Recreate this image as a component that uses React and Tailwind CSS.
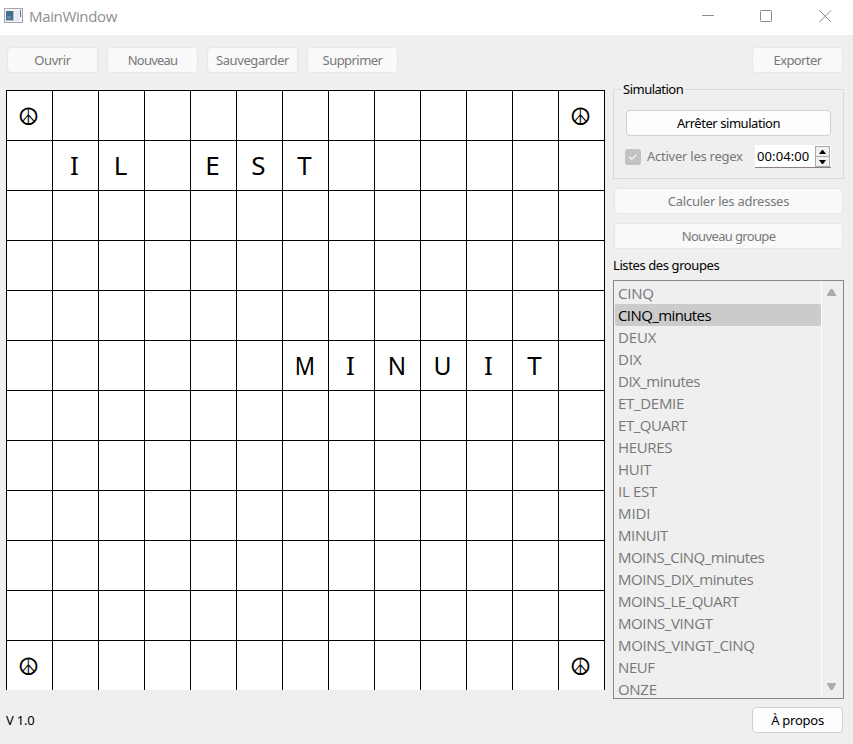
const ROWS = [
  "☮           ☮",
  " IL EST      ",
  "             ",
  "             ",
  "             ",
  "      MINUIT ",
  "             ",
  "             ",
  "             ",
  "             ",
  "             ",
  "☮           ☮",
];

const GROUPS = [
  ["CINQ", "tracking-[-0.25px]"],
  ["CINQ_minutes", "tracking-[-0.6px]"],
  ["DEUX", "tracking-[-0.1px]"],
  ["DIX", "tracking-[0px]"],
  ["DIX_minutes", "tracking-[-0.5px]"],
  ["ET_DEMIE", "tracking-[-0.3px]"],
  ["ET_QUART", "tracking-[-0.45px]"],
  ["HEURES", "tracking-[-0.35px]"],
  ["HUIT", "tracking-[-0.3px]"],
  ["IL EST", "tracking-[-0.3px]"],
  ["MIDI", "tracking-[-0.1px]"],
  ["MINUIT", "tracking-[-0.4px]"],
  ["MOINS_CINQ_minutes", "tracking-[-0.53px]"],
  ["MOINS_DIX_minutes", "tracking-[-0.45px]"],
  ["MOINS_LE_QUART", "tracking-[-0.5px]"],
  ["MOINS_VINGT", "tracking-[-0.4px]"],
  ["MOINS_VINGT_CINQ", "tracking-[-0.35px]"],
  ["NEUF", "tracking-[-0.4px]"],
  ["ONZE", "tracking-[-0.3px]"],
];

const LETTER_SHAPE = {
  M: "scale-x-[0.86]",
  N: "scale-x-[0.93]",
  U: "scale-x-[0.95]",
};

function Button({ children, enabled = false, className = "w-[91px]" }) {
  const tone = enabled
    ? "border-[#d0d0d0] bg-[#fdfdfd] text-black"
    : "border-[#e7e7e7] bg-[#f9f9f9] text-[#787878]";
  return (
    <button className={`flex h-[26px] shrink-0 items-center justify-center whitespace-nowrap rounded border pt-px ${tone} ${className}`}>
      {children}
    </button>
  );
}

function TitleBar() {
  return (
    <header className="flex h-[35px] items-center bg-white pb-[3px] pl-1">
      <svg width="19" height="16" viewBox="0 0 19 16" className="shrink-0">
        <rect x="0.5" y="0.500" width="18" height="14" fill="#f3f4f8" stroke="#a9a5ae" />
        <rect x="2" y="3" width="8" height="10" fill="#b9bdc2" />
        <rect x="2" y="3" width="7" height="9" fill="#42708f" />
        <rect x="3" y="8" width="4" height="3" fill="#5f8da0" />
        <rect x="11" y="3" width="4" height="10" fill="#e6e9ef" />
        <rect x="16" y="2" width="1" height="7" fill="#5272a8" />
      </svg>
      <span className="ml-[6px] pt-px font-['Open_Sans',sans-serif] text-[15px] tracking-[-0.35px] text-[#8f8f8f]">MainWindow</span>
      <svg width="131" height="14" viewBox="0 0 131 14" fill="none" stroke="#95868d" className="ml-auto mr-[20px]">
        <path d="M0 6.500h12" />
        <rect x="58.500" y="1.500" width="11" height="11" rx="1" />
        <path d="M117.500 1.500l11.500 11.500M129 1.500l-11.500 11.500" />
      </svg>
    </header>
  );
}

function LetterGrid() {
  return (
    <div className="w-[599px] border-r border-black bg-white">
      {ROWS.map((row, y) => (
        <div key={y} className="flex h-[50px] border-t border-black">
          {[...row].map((ch, x) => (
            <div key={x} className="flex w-[46px] items-center justify-center border-l border-black pb-[2px] pr-[2px] text-black">
              {ch === "☮" ? (
                <span className="pt-[5px] font-['DejaVu_Sans',sans-serif] text-[24px] leading-none tracking-normal">{ch}</span>
              ) : (
                <span className={`text-[26px] leading-none tracking-normal ${LETTER_SHAPE[ch] || ""}`}>{ch}</span>
              )}
            </div>
          ))}
        </div>
      ))}
    </div>
  );
}

function Simulation() {
  return (
    <fieldset className="relative h-[90px] w-[231px] border border-[#dadada] pl-3 pt-5">
      <span className="absolute -top-[10px] left-[7px] bg-[#efefef] px-[2px] leading-[18px] tracking-[-0.5px] text-black">Simulation</span>
      <Button enabled className="w-[205px] tracking-[-0.45px]">Arrêter simulation</Button>
      <div className="mt-[9px] flex h-[23px] items-center">
        <span className="-ml-px flex size-4 items-center justify-center rounded-[3px] bg-[#c3c3c3]">
          <svg width="10" height="8" viewBox="0 0 10 8" fill="none" stroke="#fff" strokeWidth="1.1">
            <path d="M1.500 4l2.300 2.300L8.500 1.600" />
          </svg>
        </span>
        <span className="ml-[6px] w-[108px] whitespace-nowrap tracking-[-0.25px] text-[#787878]">Activer les regex</span>
        <div className="flex h-[23px] w-[76px] items-start border-b border-[#8c7f84] bg-white">
          <span className="w-[60px] pl-[2px] leading-[23px] tracking-[0.1px] text-black">00:04:00</span>
          <div className="mt-px flex h-[21px] w-[15px] flex-col border border-[#a9a9a9] bg-[#f0f0f0]">
            <span className="flex flex-1 items-center justify-center border-b border-[#a9a9a9]">
              <svg width="7" height="4" viewBox="0 0 7 4"><path d="M0 4L3 0h1L7 4z" /></svg>
            </span>
            <span className="flex flex-1 items-center justify-center">
              <svg width="7" height="4" viewBox="0 0 7 4"><path d="M0 0L3 4h1L7 0z" /></svg>
            </span>
          </div>
        </div>
      </div>
    </fieldset>
  );
}

function GroupList() {
  return (
    <div className="flex h-[419px] w-[231px] overflow-hidden border border-[#828790] font-['Open_Sans',sans-serif] text-[15px]">
      <ul className="ml-px mt-px w-[206px]">
        {GROUPS.map(([name, tracking], i) => (
          <li
            key={name}
            className={`h-[22px] whitespace-nowrap rounded-[2px] pl-[3px] leading-[22px] ${tracking} ${i === 1 ? "bg-[#cbcbcb] text-black" : "text-[#787878]"}`}
          >
            {name}
          </li>
        ))}
      </ul>
      <div className="my-px flex flex-1 flex-col items-center justify-between border-l border-white pb-[7px] pr-[2px] pt-[7px]">
        <svg width="9" height="7" viewBox="0 0 9 7" fill="#acaba5"><path d="M0 6L3.500 0h2L9 6v1H0z" /></svg>
        <svg width="9" height="7" viewBox="0 0 9 7" fill="#acaba5"><path d="M0 1V0h9v1L5.500 7h-2z" /></svg>
      </div>
    </div>
  );
}

export default function App() {
  return (
    <div className="flex h-[744px] w-[853px] flex-col overflow-hidden bg-[#efefef] font-['Noto_Sans',sans-serif] text-[13px] tracking-[-0.2px]">
      <TitleBar />
      <nav className="mt-3 flex gap-[9px] pl-[7px] pr-[10px]">
        <Button className="w-[91px] tracking-[-0.4px]">Ouvrir</Button>
        <Button className="w-[91px] tracking-[-0.8px]">Nouveau</Button>
        <Button className="w-[91px] tracking-[-0.4px]">Sauvegarder</Button>
        <Button className="w-[91px] tracking-[-0.55px]">Supprimer</Button>
        <Button className="ml-auto w-[91px] tracking-[-0.6px]">Exporter</Button>
      </nav>
      <main className="mt-4 flex items-start gap-2 pl-[6px]">
        <div className="pt-px">
          <LetterGrid />
        </div>
        <aside className="flex w-[231px] flex-col">
          <Simulation />
          <Button className="ml-px mt-[9px] w-[229px] tracking-[-0.25px]">Calculer les adresses</Button>
          <Button className="ml-px mt-[9px] w-[229px] tracking-[-0.65px]">Nouveau groupe</Button>
          <p className="mb-[6px] mt-[7px] leading-[18px] tracking-[-0.4px] text-black">Listes des groupes</p>
          <GroupList />
        </aside>
      </main>
      <footer className="mt-2 flex items-center justify-between pl-[6px] pr-[10px]">
        <span className="pt-[2px] text-black">V 1.0</span>
        <Button enabled className="w-[91px] tracking-[-0.25px]">À propos</Button>
      </footer>
    </div>
  );
}
